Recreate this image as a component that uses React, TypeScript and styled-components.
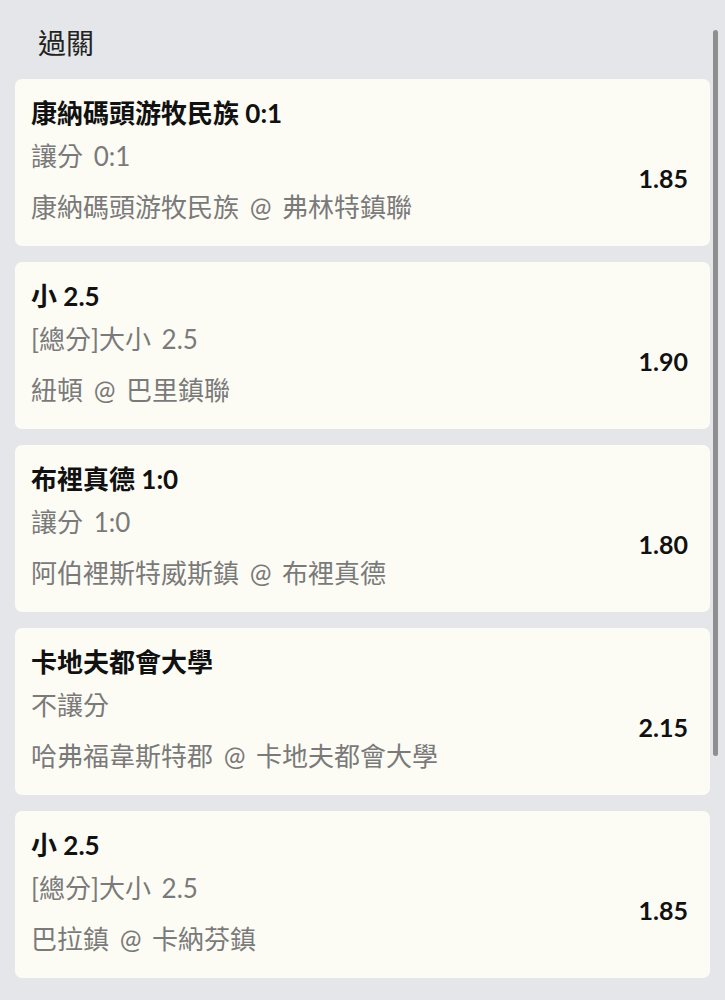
import React from 'react';
import styled, { createGlobalStyle } from 'styled-components';

const GlobalStyle = createGlobalStyle`
  html, body {
    margin: 0;
    padding: 0;
    background: #e5e6e9;
  }
  body {
    font-family: Lato, "Noto Sans CJK TC", "Noto Sans", sans-serif;
  }
`;

const Page = styled.div`
  position: relative;
  min-height: 1000px;
  padding: 23px 15px 24px;
  box-sizing: border-box;
`;

const Header = styled.h1`
  margin: 0 0 16px 23px;
  font-size: 28px;
  line-height: 40px;
  font-weight: 400;
  color: #222;
`;

const List = styled.div`
  display: flex;
  flex-direction: column;
  gap: 16px;
`;

const Card = styled.div`
  display: grid;
  grid-template-columns: 1fr auto;
  grid-template-rows: auto auto auto;
  padding: 16px 22px 21px 16px;
  background: #fcfcf5;
  border-radius: 7px;
`;

const Selection = styled.div`
  grid-column: 1;
  grid-row: 1;
  font-size: 26px;
  line-height: 36px;
  font-weight: 700;
  color: #111;
`;

const Detail = styled.div<{ $row: number; $gap: number }>`
  grid-column: 1;
  grid-row: ${(p) => p.$row};
  margin-top: ${(p) => p.$gap}px;
  font-size: 26px;
  line-height: 36px;
  word-spacing: 4px;
  color: #7a7a7a;
  white-space: nowrap;
`;

const Odds = styled.div`
  grid-column: 2;
  grid-row: 2 / 4;
  align-self: center;
  font-size: 25px;
  font-weight: 700;
  color: #111;
`;

const Scrollbar = styled.div`
  position: absolute;
  top: 30px;
  right: 7px;
  width: 5px;
  height: 726px;
  border-radius: 3px;
  background: #8f8f8f;
`;

type Bet = {
  selection: string;
  market: string;
  match: string;
  odds: string;
};

const bets: Bet[] = [
  { selection: '康納碼頭游牧民族 0:1', market: '讓分 0:1', match: '康納碼頭游牧民族 @ 弗林特鎮聯', odds: '1.85' },
  { selection: '小 2.5', market: '[總分]大小 2.5', match: '紐頓 @ 巴里鎮聯', odds: '1.90' },
  { selection: '布裡真德 1:0', market: '讓分 1:0', match: '阿伯裡斯特威斯鎮 @ 布裡真德', odds: '1.80' },
  { selection: '卡地夫都會大學', market: '不讓分', match: '哈弗福韋斯特郡 @ 卡地夫都會大學', odds: '2.15' },
  { selection: '小 2.5', market: '[總分]大小 2.5', match: '巴拉鎮 @ 卡納芬鎮', odds: '1.85' },
];

const App: React.FC = () => {
  return (
    <Page>
      <GlobalStyle />
      <Header>過關</Header>
      <List>
        {bets.map((bet, i) => (
          <Card key={i}>
            <Selection>{bet.selection}</Selection>
            <Detail $row={2} $gap={7}>{bet.market}</Detail>
            <Detail $row={3} $gap={15}>{bet.match}</Detail>
            <Odds>{bet.odds}</Odds>
          </Card>
        ))}
      </List>
      <Scrollbar />
    </Page>
  );
};

export default App;
